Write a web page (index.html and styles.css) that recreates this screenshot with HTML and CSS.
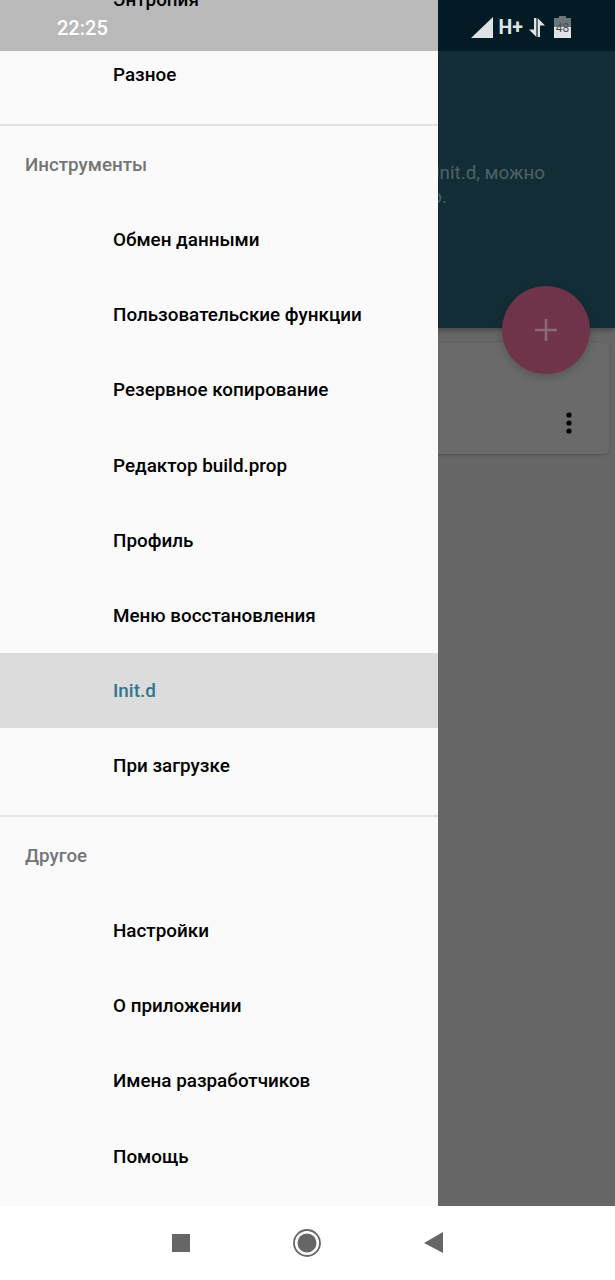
FILE: index.html
```html
<!DOCTYPE html>
<html lang="ru">
<head>
  <meta charset="UTF-8">
  <meta name="viewport" content="width=device-width, initial-scale=1.0">
  <title>Init.d</title>
  <link rel="stylesheet" href="styles.css">
</head>
<body>
  <div class="screen">
    <div class="app">
      <main class="content">
        <header class="banner">
          <p class="banner-text">
            <span class="line">Скрипты можно запускать через init.d, можно</span>
            <span class="line line-short">и при загрузке системы, если нужно.</span>
          </p>
        </header>
        <section class="card">
          <svg class="more" width="8" height="22" viewBox="0 0 8 22"><circle cx="4" cy="3" r="2.6"/><circle cx="4" cy="11" r="2.6"/><circle cx="4" cy="19" r="2.6"/></svg>
        </section>
        <div class="fab">
          <svg width="24" height="24" viewBox="0 0 24 24"><path d="M12 1v22M1 12h22" stroke="#8a6a76" stroke-width="2.6" fill="none"/></svg>
        </div>
      </main>

      <nav class="drawer">
        <ul class="menu">
          <li class="item">Энтропия</li>
          <li class="item">Разное</li>
          <li class="divider"></li>
          <li class="title">Инструменты</li>
          <li class="item">Обмен данными</li>
          <li class="item">Пользовательские функции</li>
          <li class="item">Резервное копирование</li>
          <li class="item">Редактор build.prop</li>
          <li class="item">Профиль</li>
          <li class="item">Меню восстановления</li>
          <li class="item active">Init.d</li>
          <li class="item">При загрузке</li>
          <li class="divider"></li>
          <li class="title">Другое</li>
          <li class="item">Настройки</li>
          <li class="item">О приложении</li>
          <li class="item">Имена разработчиков</li>
          <li class="item">Помощь</li>
        </ul>
      </nav>

      <div class="statusbar">
        <span class="clock">22:25</span>
        <div class="status-icons">
          <svg width="22" height="21" viewBox="0 0 22 21"><path d="M22 0v21H0z" fill="#dfe3e6"/></svg>
          <span class="network">H+</span>
          <svg class="arrows" width="16" height="19" viewBox="0 0 16 19"><path d="M5 0h2.400v19L0 11.500h5zM8.600 19V0L16 7.500h-5V19z" fill="#dfe3e6"/></svg>
          <span class="battery">48</span>
        </div>
      </div>
    </div>

    <footer class="navbar">
      <svg width="20" height="20" viewBox="0 0 20 20"><rect x="1" y="1" width="18" height="18" fill="#666"/></svg>
      <svg width="28" height="28" viewBox="0 0 28 28"><circle cx="14" cy="14" r="13" fill="none" stroke="#666" stroke-width="1.800"/><circle cx="14" cy="14" r="9.500" fill="#666"/></svg>
      <svg width="20" height="22" viewBox="0 0 20 22"><path d="M20 0v21L1 11z" fill="#666"/></svg>
    </footer>
  </div>
</body>
</html>
```

FILE: styles.css
```css
html, body {
  margin: 0;
  padding: 0;
}

body {
  font-family: Roboto, "Noto Sans", sans-serif;
  background-color: #fff;
}

.screen {
  width: 615px;
  height: 1280px;
  display: flex;
  flex-direction: column;
  overflow: hidden;
}

.app {
  position: relative;
  height: 1206px;
  background-color: #666;
  overflow: hidden;
}

.content {
  position: relative;
  display: flex;
  flex-direction: column;
  height: 100%;
}

.banner {
  height: 328px;
  box-sizing: border-box;
  padding-top: 161px;
  background-color: #132d37;
  box-shadow: 0 2px 5px rgba(0, 0, 0, 0.3);
}

.banner-text {
  margin: 0;
  width: 545px;
  color: #4e6269;
  font-size: 18.800px;
  line-height: 24px;
  white-space: nowrap;
  text-align: right;
}

.line {
  display: block;
}

.line-short {
  padding-right: 98px;
}

.fab {
  position: absolute;
  left: 502px;
  top: 286px;
  width: 88px;
  height: 88px;
  border-radius: 50%;
  background-color: #70344a;
  display: flex;
  align-items: center;
  justify-content: center;
  box-shadow: 0 3px 8px rgba(0, 0, 0, 0.2);
}

.card {
  position: relative;
  height: 111px;
  margin: 15px 6px 0 0;
  border-radius: 5px;
  background-color: #6a6a6a;
  box-shadow: 0 1px 3px rgba(0, 0, 0, 0.2);
}

.more {
  position: absolute;
  left: 565px;
  top: 69px;
}

.drawer {
  position: absolute;
  left: 0;
  top: 0;
  width: 438px;
  height: 1206px;
  background-color: #fafafa;
  overflow: hidden;
}

.menu {
  list-style: none;
  margin: -38px 0 0;
  padding: 0;
}

.item {
  height: 75.200px;
  line-height: 76.400px;
  padding-left: 113px;
  color: #000;
  font-size: 18.850px;
  font-weight: 465;
}

.item.active {
  background-color: #dcdcdc;
  color: #33758f;
}

.title {
  height: 75.600px;
  line-height: 78px;
  padding-left: 25px;
  color: #757575;
  font-size: 18.800px;
  font-weight: 500;
}

.divider {
  height: 2px;
  margin-top: 12px;
  background-color: #e3e3e3;
}

.statusbar {
  position: absolute;
  left: 0;
  top: 0;
  width: 100%;
  height: 51px;
  display: flex;
  align-items: center;
  justify-content: space-between;
  background: linear-gradient(to right, rgba(0, 0, 0, 0.26) 438px, #021b25 438px);
}

.clock {
  margin: 5px 0 0 57px;
  color: #fff;
  font-size: 20px;
  font-weight: 500;
}

.status-icons {
  display: flex;
  align-items: center;
  margin: 3px 44px 0 0;
}

.network {
  margin: 0 6px;
  color: #dfe3e6;
  font-size: 19.500px;
  font-weight: 700;
}

.arrows {
  margin-right: 9px;
}

.battery {
  position: relative;
  width: 17px;
  height: 20px;
  margin-top: 2px;
  background: linear-gradient(to bottom, #6a767c 45%, #dfe3e6 45%);
  color: #4a4f52;
  font-size: 12px;
  line-height: 20px;
  text-align: center;
}

.battery::before {
  content: "";
  position: absolute;
  left: 5px;
  top: -2px;
  width: 7px;
  height: 2px;
  background-color: #6a767c;
}

.navbar {
  flex: 1;
  display: flex;
  align-items: center;
  padding-left: 171px;
  gap: 102px;
}
```
